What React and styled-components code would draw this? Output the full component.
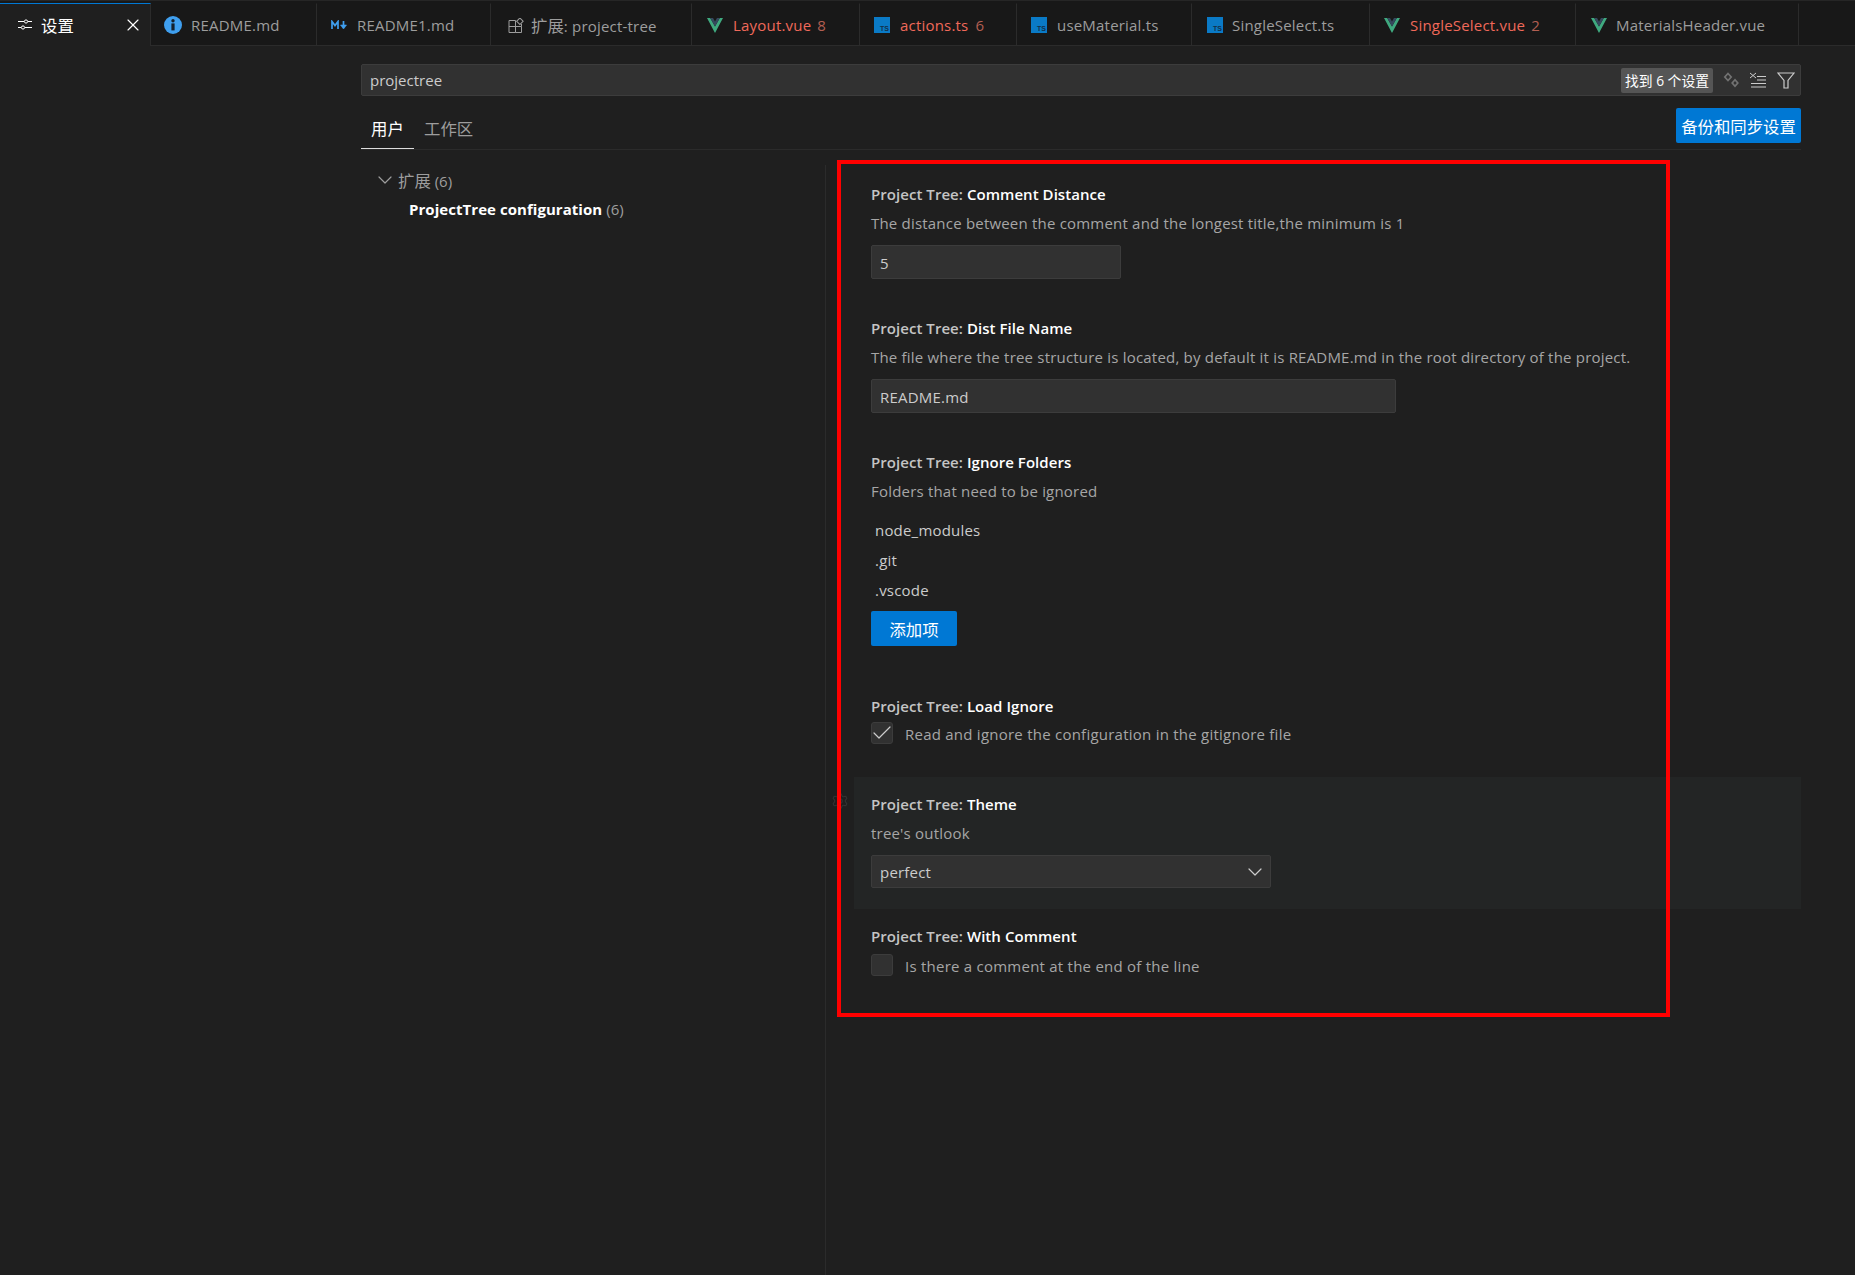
import React from 'react';
import styled, { createGlobalStyle } from 'styled-components';
import { Settings as Gear, ChevronDown, Check, X } from 'lucide-react';

const FONT = '"Open Sans", "Noto Sans CJK SC", sans-serif';

const Global = createGlobalStyle`
  html, body { margin: 0; background: #1f1f1f; }
  body { font-family: ${FONT}; font-size: 15px; color: #ccc; }
  * { box-sizing: border-box; }
  svg { flex: none; }
`;

const Page = styled.div`
  position: relative;
  width: 1855px;
  height: 1275px;
  overflow: hidden;
  background: #1f1f1f;
  display: flex;
  flex-direction: column;
`;

const TabBar = styled.div`
  display: flex;
  height: 46px;
  flex: none;
  padding-top: 2px;
  background: #181818;
  border-top: 1px solid #262626;
  border-bottom: 1px solid #2b2b2b;
`;

const Tab = styled.div`
  display: flex;
  align-items: center;
  flex: none;
  width: ${p => p.$w}px;
  padding-left: ${p => p.$pad}px;
  padding-top: ${p => (p.$active ? '0' : '1px')};
  margin-bottom: ${p => (p.$active ? '-1px' : '0')};
  background: ${p => (p.$active ? '#1f1f1f' : '#181818')};
  border-top: 1px solid ${p => (p.$active ? '#0078d4' : 'transparent')};
  border-right: 1px solid #2b2b2b;
  color: ${p => (p.$error ? '#f0695a' : p.$active ? '#fff' : '#9d9d9d')};
  font-size: 15px;
  letter-spacing: 0.2px;
  white-space: nowrap;
`;

const TabIcon = styled.span`
  display: flex;
  align-items: center;
  flex: none;
  width: ${p => p.$w}px;
`;

const TabCount = styled.span`
  margin-left: ${p => p.$gap}px;
  color: #b35f52;
  font-size: 15px;
`;

const Cjk = styled.span`
  font-size: 16.4px;
  letter-spacing: 0;
`;

const CloseWrap = styled.span`
  display: flex;
  margin-left: auto;
  margin-right: 7px;
  color: #fff;
`;

const TsBadge = styled.span`
  position: relative;
  display: block;
  width: 16px;
  height: 16px;
  background: #0a7ac6;
  color: #12304a;
  font-family: "Liberation Sans", sans-serif;
  font-size: 7px;
  font-weight: 700;
  letter-spacing: 0;
  line-height: 8px;
  text-align: right;
  padding-top: 8px;
  padding-right: 1px;
`;

const Content = styled.div`
  flex: 1;
  display: flex;
  flex-direction: column;
  padding: 18px 54px 0 361px;
  min-height: 0;
`;

const SearchBox = styled.div`
  display: flex;
  align-items: center;
  height: 32px;
  flex: none;
  padding: 0 5px 0 8px;
  background: #313131;
  border: 1px solid #3c3c3c;
  border-radius: 2px;
  font-size: 15px;
  color: #ccc;
`;

const SearchText = styled.span`
  flex: 1;
`;

const CountBadge = styled.span`
  display: flex;
  align-items: center;
  justify-content: center;
  width: 92px;
  height: 25px;
  background: #555;
  border-radius: 2px;
  color: #fff;
  font-size: 13.8px;
  white-space: nowrap;
`;

const SearchIcons = styled.span`
  display: flex;
  align-items: center;
  gap: 10px;
  margin-left: 10px;
`;

const TargetRow = styled.div`
  display: flex;
  align-items: flex-end;
  justify-content: space-between;
  height: 54px;
  flex: none;
  border-bottom: 1px solid #2b2b2b;
`;

const Targets = styled.div`
  display: flex;
  align-self: stretch;
  align-items: flex-end;
`;

const Target = styled.div`
  height: 36px;
  padding: 4px ${p => (p.$active ? '10px' : '0')} 0 ${p => (p.$active ? '10px' : '0')};
  width: ${p => (p.$active ? '53px' : 'auto')};
  margin-right: 10px;
  color: ${p => (p.$active ? '#fff' : '#9d9d9d')};
  border-bottom: 1px solid ${p => (p.$active ? '#ddd' : 'transparent')};
  font-size: 16.4px;
  line-height: 24px;
  white-space: nowrap;
`;

const PrimaryButton = styled.div`
  display: flex;
  align-items: center;
  justify-content: center;
  width: ${p => p.$w}px;
  height: 35px;
  background: #0078d4;
  border-radius: 2px;
  color: #fff;
  font-size: 16.4px;
  white-space: nowrap;
`;

const SyncWrap = styled.div`
  margin-bottom: 6px;
`;

const Body = styled.div`
  flex: 1;
  display: flex;
  padding-top: 15px;
  min-height: 0;
`;

const Toc = styled.div`
  width: 464px;
  flex: none;
  padding-top: 1px;
`;

const TocGroup = styled.div`
  display: flex;
  align-items: center;
  height: 28px;
  margin-bottom: 1px;
  padding-left: 12px;
  gap: 1px;
  color: #9d9d9d;
  font-size: 15px;
`;

const TocItem = styled.div`
  display: flex;
  align-items: center;
  height: 28px;
  padding-left: 48px;
  gap: 4px;
  font-size: 15px;
  color: #9d9d9d;
`;

const TocStrong = styled.strong`
  color: #fff;
  font-weight: 700;
  letter-spacing: 0.05px;
`;

const List = styled.div`
  flex: 1;
  border-left: 1px solid #2b2b2b;
  padding: 2px 0 0 28px;
`;

const Row = styled.div`
  position: relative;
  padding: 17px 0 ${p => p.$bottom}px 17px;
  background: ${p => (p.$hover ? '#232525' : 'transparent')};
`;

const Title = styled.div`
  font-size: 15px;
  line-height: 20px;
  font-weight: 600;
  letter-spacing: 0.05px;
  color: #c4c4c4;
`;

const TitleKey = styled.span`
  color: #fff;
`;

const Desc = styled.div`
  margin-top: 9px;
  margin-bottom: 12px;
  font-size: 15px;
  line-height: 20px;
  letter-spacing: 0.2px;
  color: #a6a6a6;
`;

const Field = styled.div`
  display: flex;
  align-items: center;
  justify-content: space-between;
  width: ${p => p.$w}px;
  height: ${p => p.$h}px;
  padding: 1px 3px 0 8px;
  background: #313131;
  border: 1px solid #3c3c3c;
  border-radius: 2px;
  font-size: 15px;
  letter-spacing: 0.2px;
  color: #ccc;
`;

const Items = styled.div`
  display: flex;
  flex-direction: column;
  margin-top: 14px;
  margin-bottom: 6px;
`;

const Item = styled.div`
  height: 30px;
  line-height: 30px;
  padding-left: 4px;
  font-size: 15px;
  letter-spacing: 0.2px;
  color: #ccc;
`;

const CheckLine = styled.div`
  display: flex;
  align-items: center;
  gap: 12px;
  margin-top: ${p => p.$top}px;
  font-size: 15px;
  letter-spacing: 0.24px;
  color: #a6a6a6;
`;

const CheckText = styled.span`
  padding-top: 2px;
`;

const CheckBox = styled.span`
  display: flex;
  align-items: center;
  justify-content: center;
  flex: none;
  width: 22px;
  height: 22px;
  background: #313131;
  border: 1px solid #3c3c3c;
  border-radius: 3px;
  color: #ccc;
`;

const RowGear = styled.span`
  position: absolute;
  left: -23px;
  top: 15px;
  display: flex;
  color: #333;
`;

const Annotation = styled.div`
  position: absolute;
  left: 837px;
  top: 160px;
  width: 833px;
  height: 857px;
  border: 4px solid #f00;
  pointer-events: none;
`;

const SlidersIcon = () => (
  <svg width="14" height="14" viewBox="0 0 14 14" fill="none" stroke="#fff" strokeWidth="1">
    <path d="M0 3.5h6M10 3.5h4M0 9.5h3M7 9.5h7" />
    <circle cx="8" cy="3.5" r="1.6" />
    <circle cx="5" cy="9.5" r="1.6" />
  </svg>
);

const InfoIcon = () => (
  <svg width="18" height="18" viewBox="0 0 18 18">
    <circle cx="9" cy="9" r="9" fill="#3f9fef" />
    <circle cx="9" cy="4.8" r="1.7" fill="#14202c" />
    <rect x="7.4" y="7.4" width="3.2" height="7" fill="#14202c" />
  </svg>
);

const MarkdownIcon = () => (
  <svg width="16" height="10" viewBox="0 0 16 10" fill="none" stroke="#3f9fef" strokeWidth="1.7">
    <path d="M1 9V1.5L4 5.5L7 1.5V9" />
    <path d="M12.5 1V8" />
    <path d="M9.5 5L12.5 9L15.5 5Z" fill="#3f9fef" strokeWidth="0.6" />
  </svg>
);

const ExtensionIcon = () => (
  <svg width="16" height="15" viewBox="0 0 16 15" fill="none" stroke="#9d9d9d" strokeWidth="1">
    <path d="M1 2.5h6.5v12H1zM1 8.5h12.5V14.5H7.5M7.5 8.5" />
    <path d="M13.5 8.5V6" />
    <rect x="9.6" y="0.9" width="4.6" height="4.6" transform="rotate(45 11.9 3.2)" />
  </svg>
);

const VueIcon = () => (
  <svg width="16" height="15" viewBox="0 0 16 15">
    <polygon points="0,0 3.2,0 8,8.4 12.8,0 16,0 8,15" fill="#3fa97f" />
    <polygon points="3.2,0 6,0 8,3.6 10,0 12.8,0 8,8.4" fill="#35495e" />
  </svg>
);

const SparkleIcon = () => (
  <svg width="16" height="16" viewBox="0 0 16 16" fill="none" stroke="#727272" strokeWidth="1.7">
    <path d="M5 1.5L8.2 5L5 8.5L1.8 5Z" />
    <path d="M12 7.8L14.8 11L12 14.2L9.2 11Z" />
  </svg>
);

const ClearListIcon = () => (
  <svg width="18" height="16" viewBox="0 0 18 16" fill="none" stroke="#ccc" strokeWidth="1">
    <path d="M1 1l6 5M7 1l-6 5" />
    <path d="M8 4.5h9M8 8h9M2 11.5h15M2 15h15" />
  </svg>
);

const FilterIcon = () => (
  <svg width="18" height="17" viewBox="0 0 18 17" fill="none" stroke="#ccc" strokeWidth="1.2">
    <path d="M1 1h16L11 8.5V16H7V8.5Z" />
  </svg>
);

const tabs = [
  { w: 166, pad: 13, iw: 27, icon: <InfoIcon />, name: 'README.md' },
  { w: 174, pad: 14, iw: 26, icon: <MarkdownIcon />, name: 'README1.md' },
  { w: 201, pad: 17, iw: 23, icon: <ExtensionIcon />, name: <><Cjk>扩展</Cjk>: project-tree</> },
  { w: 168, pad: 15, iw: 26, icon: <VueIcon />, name: 'Layout.vue', error: true, count: 8, gap: 6 },
  { w: 157, pad: 14, iw: 26, icon: <TsBadge>TS</TsBadge>, name: 'actions.ts', error: true, count: 6, gap: 7 },
  { w: 175, pad: 14, iw: 26, icon: <TsBadge>TS</TsBadge>, name: 'useMaterial.ts' },
  { w: 178, pad: 15, iw: 25, icon: <TsBadge>TS</TsBadge>, name: 'SingleSelect.ts' },
  { w: 206, pad: 14, iw: 26, icon: <VueIcon />, name: 'SingleSelect.vue', error: true, count: 2, gap: 6 },
  { w: 223, pad: 15, iw: 25, icon: <VueIcon />, name: 'MaterialsHeader.vue' },
];

export default function App() {
  return (
    <Page>
      <Global />
      <TabBar>
        <Tab $active $w={151} $pad={18}>
          <TabIcon $w={23}><SlidersIcon /></TabIcon>
          <Cjk>设置</Cjk>
          <CloseWrap><X size={20} strokeWidth={1.4} /></CloseWrap>
        </Tab>
        {tabs.map((t, i) => (
          <Tab key={i} $w={t.w} $pad={t.pad} $error={t.error}>
            <TabIcon $w={t.iw}>{t.icon}</TabIcon>
            <span>{t.name}</span>
            {t.count ? <TabCount $gap={t.gap}>{t.count}</TabCount> : null}
          </Tab>
        ))}
      </TabBar>
      <Content>
        <SearchBox>
          <SearchText>projectree</SearchText>
          <CountBadge>找到 6 个设置</CountBadge>
          <SearchIcons>
            <SparkleIcon />
            <ClearListIcon />
            <FilterIcon />
          </SearchIcons>
        </SearchBox>
        <TargetRow>
          <Targets>
            <Target $active>用户</Target>
            <Target>工作区</Target>
          </Targets>
          <SyncWrap><PrimaryButton $w={125}>备份和同步设置</PrimaryButton></SyncWrap>
        </TargetRow>
        <Body>
          <Toc>
            <TocGroup>
              <ChevronDown size={24} strokeWidth={1.2} />
              <span><Cjk>扩展</Cjk> (6)</span>
            </TocGroup>
            <TocItem>
              <TocStrong>ProjectTree configuration</TocStrong> (6)
            </TocItem>
          </Toc>
          <List>
            <Row $bottom={22}>
              <Title>Project Tree: <TitleKey>Comment Distance</TitleKey></Title>
              <Desc>The distance between the comment and the longest title,the minimum is 1</Desc>
              <Field $w={250} $h={34}>5</Field>
            </Row>
            <Row $bottom={22}>
              <Title>Project Tree: <TitleKey>Dist File Name</TitleKey></Title>
              <Desc>The file where the tree structure is located, by default it is README.md in the root directory of the project.</Desc>
              <Field $w={525} $h={34}>README.md</Field>
            </Row>
            <Row $bottom={33}>
              <Title>Project Tree: <TitleKey>Ignore Folders</TitleKey></Title>
              <Desc>Folders that need to be ignored</Desc>
              <Items>
                <Item>node_modules</Item>
                <Item>.git</Item>
                <Item>.vscode</Item>
              </Items>
              <PrimaryButton $w={86}>添加项</PrimaryButton>
            </Row>
            <Row $bottom={33}>
              <Title>Project Tree: <TitleKey>Load Ignore</TitleKey></Title>
              <CheckLine $top={6}>
                <CheckBox><Check size={24} strokeWidth={1.2} /></CheckBox>
                <CheckText>Read and ignore the configuration in the gitignore file</CheckText>
              </CheckLine>
            </Row>
            <Row $hover $bottom={21}>
              <RowGear><Gear size={18} strokeWidth={1.5} /></RowGear>
              <Title>Project Tree: <TitleKey>Theme</TitleKey></Title>
              <Desc>tree's outlook</Desc>
              <Field $w={400} $h={33}>
                perfect
                <ChevronDown size={24} strokeWidth={1.2} />
              </Field>
            </Row>
            <Row $bottom={20}>
              <Title>Project Tree: <TitleKey>With Comment</TitleKey></Title>
              <CheckLine $top={8}>
                <CheckBox />
                <CheckText>Is there a comment at the end of the line</CheckText>
              </CheckLine>
            </Row>
          </List>
        </Body>
      </Content>
      <Annotation />
    </Page>
  );
}
